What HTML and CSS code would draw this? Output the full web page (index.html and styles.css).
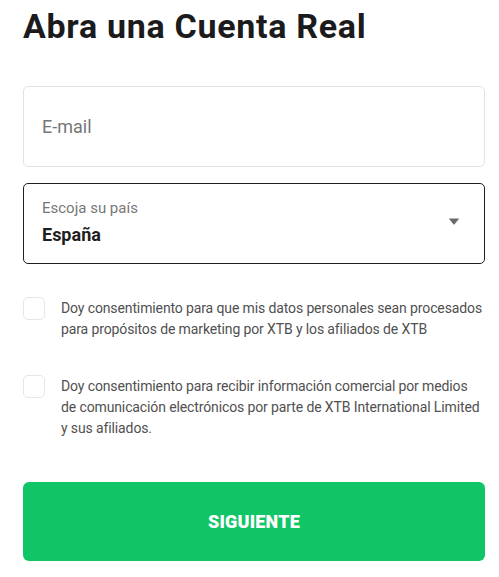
FILE: index.html
```html
<!DOCTYPE html>
<html lang="es">
<head>
<meta charset="utf-8">
<title>Abra una Cuenta Real</title>
<link rel="stylesheet" href="styles.css">
</head>
<body>
<main class="page">
  <h1 class="title">Abra una Cuenta Real</h1>
  <form class="form">
    <div class="field field-email">
      <span class="placeholder">E-mail</span>
    </div>
    <div class="field field-select">
      <div class="select-text">
        <span class="select-label">Escoja su país</span>
        <span class="select-value">España</span>
      </div>
      <svg class="arrow" width="12" height="7" viewBox="0 0 12 7" aria-hidden="true">
        <path d="M0.8 0.5 H11.2 L6.6 6.2 Q6 6.8 5.4 6.2 Z" fill="#6b6b6b"/>
      </svg>
    </div>
    <div class="consents">
      <label class="consent">
        <span class="box"></span>
        <span class="consent-text">Doy consentimiento para que mis datos personales sean procesados para propósitos de marketing por XTB y los afiliados de XTB</span>
      </label>
      <label class="consent">
        <span class="box"></span>
        <span class="consent-text">Doy consentimiento para recibir información comercial por medios de comunicación electrónicos por parte de XTB International Limited y sus afiliados.</span>
      </label>
    </div>
    <button type="button" class="submit">SIGUIENTE</button>
  </form>
</main>
</body>
</html>
```

FILE: styles.css
```css
html, body {
  margin: 0;
  padding: 0;
  background: #ffffff;
}

body {
  font-family: Roboto, "Liberation Sans", sans-serif;
  color: #1d1d1f;
}

.page {
  padding: 0 14px 0 23px;
}

.title {
  margin: 0;
  padding-top: 6px;
  font-size: 34px;
  line-height: 40px;
  font-weight: 700;
  color: #1b1b1d;
  letter-spacing: 0.7px;
}

.form {
  display: flex;
  flex-direction: column;
  margin-top: 40px;
}

.field {
  box-sizing: border-box;
  height: 81px;
  border-radius: 5px;
  display: flex;
  align-items: center;
  padding: 0 18px;
}

.field-email {
  border: 1px solid #e2e2e2;
}

.placeholder {
  font-size: 18px;
  color: #767676;
}

.field-select {
  margin-top: 16px;
  border: 1px solid #1f1f1f;
  justify-content: space-between;
  padding-right: 24px;
}

.select-text {
  display: flex;
  flex-direction: column;
  margin-top: -4px;
}

.select-label {
  font-size: 15px;
  line-height: 20px;
  color: #777777;
}

.select-value {
  margin-top: 6px;
  font-size: 18px;
  line-height: 22px;
  font-weight: 700;
  color: #1f1f1f;
}

.arrow {
  display: block;
  margin-top: -5px;
}

.consents {
  display: flex;
  flex-direction: column;
  gap: 35px;
  margin-top: 33px;
}

.consent {
  display: flex;
  align-items: flex-start;
  gap: 16px;
}

.box {
  flex: none;
  box-sizing: border-box;
  width: 22px;
  height: 23px;
  border: 1px solid #e6e6e6;
  border-radius: 5px;
  background: #fff;
}

.consent-text {
  font-size: 14px;
  line-height: 21px;
  letter-spacing: -0.12px;
  color: #505050;
  margin-top: 1px;
}

.submit {
  margin-top: 43px;
  height: 79px;
  border: none;
  border-radius: 6px;
  background: #10c566;
  color: #ffffff;
  font-family: Roboto, "Liberation Sans", sans-serif;
  font-size: 18px;
  font-weight: 900;
  letter-spacing: 0.2px;
  cursor: pointer;
}
```
